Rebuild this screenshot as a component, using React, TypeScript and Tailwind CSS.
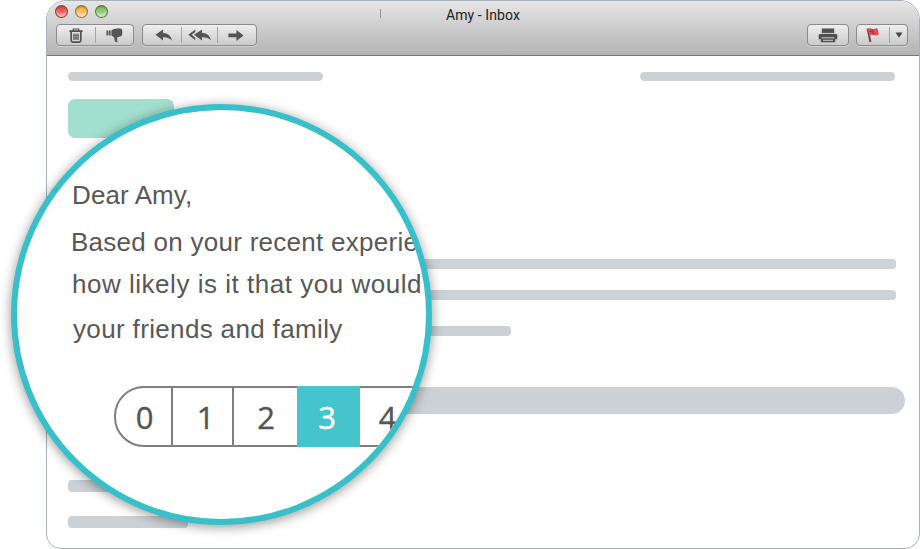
import type { ReactNode } from "react";

function Light({ tone }: { tone: string }) {
  return (
    <span
      className={`h-[13px] w-[13px] rounded-full border border-black/40 shadow-[inset_0_1px_2px_rgba(0,0,0,0.3),inset_0_-3px_3px_rgba(255,255,255,0.6)] ${tone}`}
    />
  );
}

function ToolGroup({ className, children }: { className: string; children: ReactNode }) {
  return (
    <div
      className={`flex h-[22px] items-center rounded-[4px] border border-[#8b8b8b] bg-gradient-to-b from-[#efefef] to-[#cacaca] shadow-[0_1px_0_rgba(255,255,255,0.35)] ${className}`}
    >
      {children}
    </div>
  );
}

function Divider() {
  return <span className="h-4 w-px shrink-0 bg-[#a3a3a3]" />;
}

function Cell({ children }: { children: ReactNode }) {
  return <span className="flex h-full flex-1 items-center justify-center">{children}</span>;
}

function TrashIcon() {
  return (
    <svg width="14" height="15" viewBox="0 0 14 15" fill="none" stroke="#505050">
      <path d="M.4 3.200h13.200" strokeWidth="1.700" />
      <path d="M4.300 2.800V1h5.400v1.800" strokeWidth="1.200" />
      <path d="M2.200 4v8.600q0 1.500 1.500 1.500h6.600q1.500 0 1.500-1.500V4" strokeWidth="1.700" />
      <path d="M5 5.500v6.500M7 5.500v6.500M9 5.500v6.500" strokeWidth="1.100" />
      <path d="M4 7.500h6M4 10h6" strokeWidth=".6" />
    </svg>
  );
}

function ThumbDownIcon() {
  return (
    <svg width="17" height="15" viewBox="0 0 17 15" fill="#555">
      <path d="M.4 2.400h1.500v5H.4zM2.600 2.400h2v5h-2zM5.400 2.200Q8 .6 11 .6h3.500q1.600.2 1.700 2l.1 3.200q0 2-1.700 2.600l-3.300.8q-.6 2 .2 4.900-2 .6-2.700-1.200L8 9.300 5.400 7.400z" />
    </svg>
  );
}

function ReplyIcon() {
  return (
    <svg width="18" height="13" viewBox="0 0 18 13" fill="#555">
      <path d="M.5 5.800 8 .6v3.200q7.300.6 9.300 8-3.500-3.800-9.300-3.600v3.200z" />
    </svg>
  );
}

function ReplyAllIcon() {
  return (
    <svg width="24" height="13" viewBox="0 0 24 13" fill="#555">
      <path d="M.3 5.800 7.300.6v2.500L3.700 5.800l3.600 2.900v2.500z" />
      <path d="M6 5.800 14 .6v3.200q7.200.4 9.200 7.600-3.500-3.400-9.200-3.200v3.200z" />
    </svg>
  );
}

function ForwardIcon() {
  return (
    <svg width="16" height="13" viewBox="0 0 16 13" fill="#555">
      <path d="M.4 4.400h8V.9l7.200 5.500-7.200 5.500V8.300h-8z" />
    </svg>
  );
}

function PrinterIcon() {
  return (
    <svg width="20" height="15" viewBox="0 0 20 15">
      <path d="M3.800.6h12.400v4.600H3.800z" fill="#505050" />
      <path d="M2 5.900h16q1.300 0 1.300 1.300v4H.7v-4q0-1.300 1.300-1.300" fill="#505050" />
      <path d="M3 5.400h14" stroke="#c4c4c4" strokeWidth=".9" />
      <path d="M2.800 9.200h14.400v5H2.800z" fill="#505050" />
      <path d="M3.500 9.800h13M5 12.300h10" stroke="#ccc" strokeWidth="1" />
    </svg>
  );
}

function FlagIcon() {
  return (
    <svg width="14" height="16" viewBox="0 0 14 16">
      <path d="M1.600 1.500 4.400 15" stroke="#654b4b" strokeWidth="2" />
      <path d="M1.500 2.200q2.400-1.600 4.600-.4Q8 2.400 11.300 1l1.500 6.600q-2.500 1.600-5 .5Q5.500 7.300 3.300 8.800z" fill="#e2495a" />
      <path d="m6 2 1.500 6M2.300 5q3-1.500 5 0" fill="none" stroke="#a92f3c" strokeWidth="1" />
    </svg>
  );
}

function TitleBar() {
  return (
    <header className="flex h-[55px] flex-col border-b border-[#777] bg-gradient-to-b from-[#e6e6e6] to-[#b3b3b3]">
      <div className="grid h-[23px] grid-cols-3 pl-[8px]">
        <div className="flex gap-[7px] pt-[4px]">
          <Light tone="bg-[#ee5656]" />
          <Light tone="bg-[#f6ba50]" />
          <Light tone="bg-[#88c96a]" />
        </div>
        <div className="flex justify-center pt-[4px]">
          <span className="mr-[65px] mt-1 h-[9px] w-px bg-[#999]" />
          <h1 className="mr-[74px] whitespace-nowrap font-[Roboto,sans-serif] text-[14px] leading-[20px] tracking-[0.1px] text-[#222]">
            Amy - Inbox
          </h1>
        </div>
      </div>
      <div className="flex pl-[9px] pr-[11px]">
        <ToolGroup className="w-[78px]">
          <Cell><TrashIcon /></Cell>
          <Divider />
          <Cell><ThumbDownIcon /></Cell>
        </ToolGroup>
        <ToolGroup className="ml-2 w-[115px]">
          <span className="flex w-[38px] justify-center pl-[3px]"><ReplyIcon /></span>
          <Divider />
          <Cell><ReplyAllIcon /></Cell>
          <Divider />
          <span className="flex w-[38px] justify-center pr-[3px]"><ForwardIcon /></span>
        </ToolGroup>
        <ToolGroup className="ml-auto w-[42px]">
          <Cell><PrinterIcon /></Cell>
        </ToolGroup>
        <ToolGroup className="ml-[7px] w-[52px]">
          <Cell><FlagIcon /></Cell>
          <Divider />
          <span className="flex w-[17px] justify-center">
            <svg width="8" height="6" viewBox="0 0 8 6"><path d="M.5.5h7L4 5.700z" fill="#444" /></svg>
          </span>
        </ToolGroup>
      </div>
    </header>
  );
}

function MessageBody() {
  return (
    <div className="flex flex-col items-start pl-[21px] pt-[16px]">
      <div className="flex w-[827px] justify-between">
        <span className="h-[9px] w-[255px] rounded-full bg-[#ccd1d6]" />
        <span className="h-[9px] w-[255px] rounded-full bg-[#ccd1d6]" />
      </div>
      <span className="mt-[18px] h-[39px] w-[106px] rounded-[7px] bg-[#a2dfcf]" />
      <span className="mt-[121px] h-[10px] w-[828px] rounded-[4px] bg-[#ccd1d6]" />
      <span className="mt-[21px] h-[10px] w-[828px] rounded-[4px] bg-[#ccd1d6]" />
      <span className="mt-[26px] h-[10px] w-[443px] rounded-[4px] bg-[#ccd1d6]" />
      <span className="mt-[51px] h-[27px] w-[837px] rounded-full bg-[#ccd1d6]" />
      <span className="mt-[66px] h-[12px] w-[120px] rounded-[4px] bg-[#ccd1d6]" />
      <span className="mt-[24px] h-[12px] w-[120px] rounded-[4px] bg-[#ccd1d6]" />
    </div>
  );
}

function Magnifier() {
  return (
    <section className="absolute left-[11px] top-[104px] h-[421px] w-[421px] overflow-hidden rounded-full border-[6px] border-[#37c0ca] bg-white shadow-[0_2px_12px_rgba(0,0,0,0.42)]">
      <div className="flex flex-col items-start whitespace-nowrap pl-[54px] pt-[70px] font-['Liberation_Sans',Arial,sans-serif] text-[26px] leading-[30px] text-[#585858]">
        <p className="pl-px tracking-[0.1px]">Dear Amy,</p>
        <p className="mt-[17px] tracking-[0.27px]">Based on your recent experie</p>
        <p className="mt-[12px] pl-px tracking-[0.52px]">how likely is it that you would</p>
        <p className="mt-[15px] pl-[2px] tracking-[0.35px]">your friends and family</p>
      </div>
      <div className="ml-[97px] mt-[42px] flex h-[61px] w-[430px] font-['Open_Sans',sans-serif] text-[31px] leading-none text-[#555] [-webkit-text-stroke:0.4px_currentColor]">
        <span className="flex w-[59px] items-center justify-center rounded-l-[30px] border-2 border-[#7e7e7e] pl-[2px] pt-px">0</span>
        <span className="flex w-[61px] items-center justify-center border-y-2 border-r-2 border-[#7e7e7e] pl-[6px] pt-px">1</span>
        <span className="flex w-[63px] items-center justify-center border-y-2 border-[#7e7e7e] pl-px pt-px">2</span>
        <span className="flex w-[63px] items-center justify-center bg-[#46c4cd] pr-[3px] pt-px text-white">3</span>
        <span className="flex w-[61px] items-center justify-center border-y-2 border-r-2 border-[#7e7e7e] pr-[4px] pt-px">4</span>
      </div>
    </section>
  );
}

export default function App() {
  return (
    <main className="relative h-[549px] w-[920px] overflow-hidden bg-white pl-[46px]">
      <div className="h-[549px] w-[874px] overflow-hidden rounded-b-[15px] rounded-t-[20px] border border-[#a8b0b9] bg-white">
        <TitleBar />
        <MessageBody />
      </div>
      <Magnifier />
    </main>
  );
}
